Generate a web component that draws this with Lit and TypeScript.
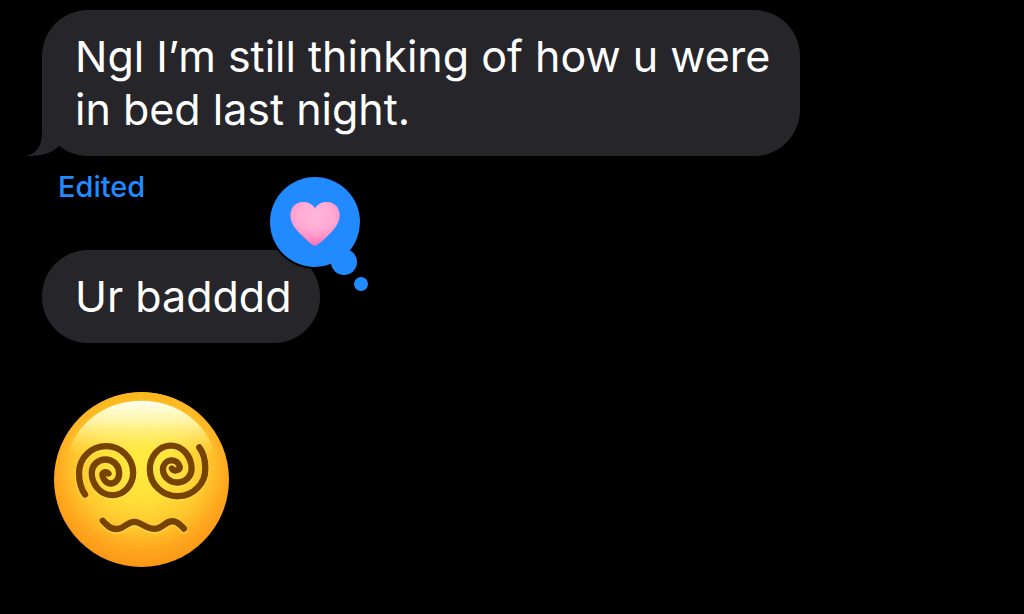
import { LitElement, html, css, svg } from "lit";
import { customElement } from "lit/decorators.js";

@customElement("tapback-heart")
class TapbackHeart extends LitElement {
  static styles = css`
    :host { display: block; }
    svg { display: block; width: 104px; height: 120px; }
  `;
  render() {
    return html`
      <svg viewBox="0 0 104 120" role="img" aria-label="Pink heart reaction">
        <defs>
          <linearGradient id="pink" x1="0" y1="0" x2="0" y2="1">
            <stop offset="0" stop-color="#ffb9e0" />
            <stop offset="0.55" stop-color="#ffa0cf" />
            <stop offset="1" stop-color="#ff5fa8" />
          </linearGradient>
          <radialGradient id="glow" cx="0.5" cy="0.4" r="0.62">
            <stop offset="0" stop-color="#ffb8da" />
            <stop offset="0.6" stop-color="#ffabd5" stop-opacity="0.6" />
            <stop offset="1" stop-color="#ff74bc" stop-opacity="0.6" />
          </radialGradient>
        </defs>
        <circle cx="48" cy="48" r="47" fill="#000" />
        <g fill="#218aff">
          <circle cx="48" cy="48" r="45" />
          <circle cx="77" cy="88" r="13" />
          <circle cx="94" cy="110" r="7" />
        </g>
        <g>
          <path fill="url(#pink)" d="M48 71.500C46 71.500 43 69 36 62.500C28 55 23.500 49 23.500 41C23.500 33.500 29 28 36 28C41.500 28 45.500 30.500 48 34.500C50.500 30.500 54.500 28 60 28C67 28 72.500 33.500 72.500 41C72.500 49 68 55 60 62.500C53 69 50 71.500 48 71.500Z" />
          <path fill="url(#glow)" d="M48 71.500C46 71.500 43 69 36 62.500C28 55 23.500 49 23.500 41C23.500 33.500 29 28 36 28C41.500 28 45.500 30.500 48 34.500C50.500 30.500 54.500 28 60 28C67 28 72.500 33.500 72.500 41C72.500 49 68 55 60 62.500C53 69 50 71.500 48 71.500Z" />
        </g>
      </svg>
    `;
  }
}

const features = svg`
  <path d="M120 328C108 312 102 288 102 263A81 80 0 0 1 264 263A62 67 0 0 1 140 263A41 40 0 0 1 222 263A25 30 0 0 1 172 267A10 9 0 0 1 190 265" />
  <path d="M462 187C474 202 480 225 480 250A83 81 0 0 1 314 254A62 70 0 0 1 439 250A43 41 0 0 1 353 252A26 28 0 0 1 404 246A13 12 0 0 1 380 250" />
  <path d="M173 407C188 423 199 433 219 431C240 428 247 409 268 410C289 411 303 431 328 431C353 431 358 408 382 408C397 408 407 420 416 430" />
`;

@customElement("dizzy-face")
class DizzyFace extends LitElement {
  static styles = css`
    :host { display: block; }
    svg { display: block; width: 175px; height: 175px; }
    .line { fill: none; stroke-width: 19; stroke-linecap: round; stroke-linejoin: round; }
    .dark { stroke: #774300; }
    .light { stroke: #ffe75c; stroke-width: 23; opacity: 0.5; }
  `;
  render() {
    return html`
      <svg viewBox="27 21 524 524" role="img" aria-label="Face with spiral eyes">
        <defs>
          <radialGradient id="skin" gradientUnits="userSpaceOnUse" cx="289" cy="235" r="320">
            <stop offset="0" stop-color="#ffec3e" />
            <stop offset="0.35" stop-color="#ffdf38" />
            <stop offset="0.62" stop-color="#ffc62d" />
            <stop offset="0.8" stop-color="#ffa81f" />
            <stop offset="1" stop-color="#fb9314" />
          </radialGradient>
          <linearGradient id="crown" x1="0" y1="0" x2="0" y2="1">
            <stop offset="0" stop-color="#fbb81c" />
            <stop offset="1" stop-color="#fbb01c" stop-opacity="0" />
          </linearGradient>
          <linearGradient id="shine" x1="0" y1="0" x2="0" y2="1">
            <stop offset="0" stop-color="#fffff0" />
            <stop offset="0.3" stop-color="#fffcb8" stop-opacity="0.85" />
            <stop offset="0.55" stop-color="#fff68a" stop-opacity="0.4" />
            <stop offset="0.76" stop-color="#fff25a" stop-opacity="0" />
          </linearGradient>
        </defs>
        <circle cx="289" cy="283" r="262" fill="url(#skin)" />
        <path fill="url(#crown)" d="M70 140A262 262 0 0 1 508 140Z" />
        <path fill="url(#shine)" d="M66 215C94 112 180 47 289 47C398 47 484 112 512 215C500 250 400 262 289 262C178 262 78 250 66 215Z" />
        <g class="line light" transform="translate(0 3)">${features}</g>
        <g class="line dark">${features}</g>
      </svg>
    `;
  }
}

@customElement("app-root")
class AppRoot extends LitElement {
  static styles = css`
    :host {
      display: block;
      min-height: 100vh;
      box-sizing: border-box;
      background: #000;
      color: #fff;
      font-family: Inter, "Liberation Sans", sans-serif;
    }
    .thread {
      display: flex;
      flex-direction: column;
      align-items: flex-start;
      padding: 10px 16px 48px 42px;
    }
    .bubble {
      position: relative;
      box-sizing: border-box;
      max-width: 74vw;
      margin: 0;
      padding: 20px 28px 20px 33px;
      border-radius: 46px;
      background: #26252a;
      font-size: 43px;
      line-height: 53px;
    }
    .tail {
      position: absolute;
      left: -15px;
      bottom: 0;
      width: 48px;
      height: 48px;
    }
    .status {
      margin: 14px 0 0 16px;
      padding: 0;
      border: 0;
      background: none;
      color: #218aff;
      font: 500 29px/34px Inter, "Liberation Sans", sans-serif;
      cursor: pointer;
    }
    .reply { margin-top: 46px; }
    .tapback {
      position: absolute;
      right: -51px;
      top: -76px;
    }
    .sticker { margin: 49px 0 0 12px; }
  `;
  render() {
    return html`
      <main class="thread">
        <p class="bubble">
          <svg class="tail" viewBox="0 0 48 48" aria-hidden="true">
            <path fill="#26252a" d="M15 0V24C15 37 11 44 0 48C13 48 24 46 32 38L48 20V0Z" />
          </svg>
          Ngl I’m still thinking of how u were in bed last night.
        </p>
        <button class="status" type="button">Edited</button>
        <p class="bubble reply">
          Ur badddd
          <tapback-heart class="tapback"></tapback-heart>
        </p>
        <dizzy-face class="sticker"></dizzy-face>
      </main>
    `;
  }
}
